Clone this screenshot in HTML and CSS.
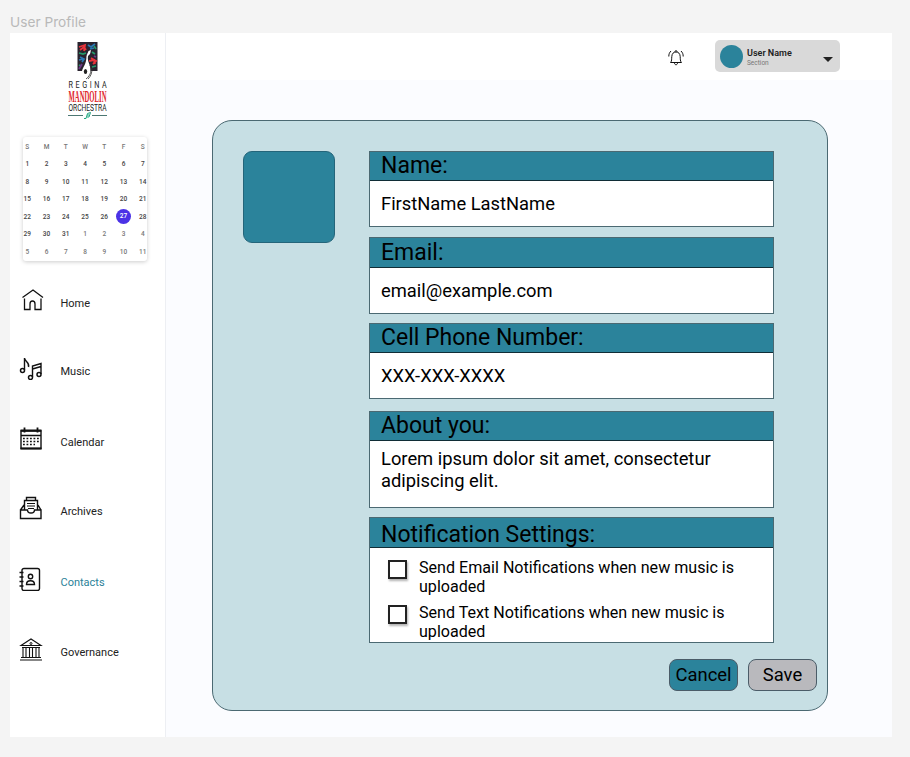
FILE: index.html
```html
<!DOCTYPE html>
<html lang="en">
<head>
<meta charset="utf-8">
<title>User Profile</title>
<link rel="stylesheet" href="styles.css">
</head>
<body>
<div class="frame-title">User Profile</div>
<div class="frame">
  <aside class="sidebar">
    <svg class="logo" width="42" height="80" viewBox="0 0 42 80">
      <rect x="10.500" y="1" width="20" height="29" fill="#29232e"/>
      <g fill="none" stroke-width="1.800">
        <path stroke="#e8333a" d="M12 6l6-2-1 6M13 9l4-3 2 3M24 17l5 3-3 3M22 20l5-1 1 4"/>
        <path stroke="#2b78b5" d="M21 4l3 2 4-3M23 8l4-1M13 16l4 2-2 3M12 19l4-1"/>
        <path stroke="#25986a" d="M12 12l4 1 3-1M25 11l3 2M25 26l4-1M27 5l2 3M12 24l2 1"/>
        <path stroke="#6e3787" d="M20 14l3-3M12 28l3-5M27 15l2 1"/>
      </g>
      <path d="M21.500 10l2.500-1-1 4-2 2c-1 6 2.500 8 2.500 14 0 6-3 9-5.500 9s-4-4-3-8c1-4 4.500-7 4.500-15z" fill="#fff"/>
      <ellipse cx="18.500" cy="30.500" rx="1.700" ry="2.500" fill="#222"/>
      <path d="M23 24c2 5 1 10-4 14M25 27c0 5-1 8-4 11" fill="none" stroke="#333" stroke-width=".8"/>
      <g class="logo-text">
        <text transform="translate(1.500 47) scale(.85 1)" font-size="8.500" textLength="45" fill="#222">REGINA</text>
        <text class="logo-serif" transform="translate(1.500 60.500) scale(1 1.750)" font-size="9" textLength="38" lengthAdjust="spacingAndGlyphs" fill="#e0262b">MANDOLIN</text>
        <text x="1.500" y="70" font-size="9" textLength="38" lengthAdjust="spacingAndGlyphs" fill="#222">ORCHESTRA</text>
      </g>
      <path d="M1 74.500h15M25 74.500h15" stroke="#4c7772" stroke-width="1"/>
      <path d="M17 77.500h2l1.500-5 3-1-1.500 4.500h-2M20 74h2" fill="none" stroke="#21a882" stroke-width="1"/>
    </svg>
    <div class="calendar">
      <b>S</b><b>M</b><b>T</b><b>W</b><b>T</b><b>F</b><b>S</b>
      <span>1</span><span>2</span><span>3</span><span>4</span><span>5</span><span>6</span><span>7</span>
      <span>8</span><span>9</span><span>10</span><span>11</span><span>12</span><span>13</span><span>14</span>
      <span>15</span><span>16</span><span>17</span><span>18</span><span>19</span><span>20</span><span>21</span>
      <span>22</span><span>23</span><span>24</span><span>25</span><span>26</span><span class="today">27</span><span>28</span>
      <span>29</span><span>30</span><span>31</span><i>1</i><i>2</i><i>3</i><i>4</i>
      <i>5</i><i>6</i><i>7</i><i>8</i><i>9</i><i>10</i><i>11</i>
    </div>
    <nav class="nav">
      <a class="item home">
        <svg width="24" height="24" viewBox="0 0 24 24"><path d="M1.500 9.500L12 2l10 7.500M3.500 10.500v11h5.500V16c0-4 5-4 5 0v5.500h6v-11" stroke-width="1.300"/></svg>
        <span>Home</span></a>
      <a class="item music">
        <svg width="24" height="24" viewBox="0 0 24 24"><path d="M5.500 14V2c0 3.500 5.500 4 4 9M13.500 21V10l8.500-2.500V18M13.500 13l8.500-2.500" stroke-width="1.400"/><g stroke-width="1.500"><ellipse cx="3.500" cy="14.500" rx="2" ry="2"/><ellipse cx="11.500" cy="21.500" rx="2" ry="2"/><ellipse cx="20" cy="18.500" rx="2" ry="2"/></g></svg>
        <span>Music</span></a>
      <a class="item cal">
        <svg width="24" height="24" viewBox="0 0 24 24"><path d="M2 4h20v17.500H2zM2 8.500h20" stroke-width="1.400"/><path d="M1.500 3.500h21M5.500 .5v5M18.500 .5v5M1.500 21.500h21" stroke-width="1.800"/><path d="M4 11.500h16.500M4 14.500h16.500M4 17.500h12" stroke-width="1.700" stroke-dasharray="1.800 1.700"/></svg>
        <span>Calendar</span></a>
      <a class="item archives">
        <svg width="24" height="24" viewBox="0 0 24 24"><path d="M1.500 14l3.500-5M19 9l3 5M1.500 14v8.500h20.500V14h-6.500c0 4-7 4-7 0zM5.500 13.500V4.500h13v9M7.500 4V1.500h9V4" stroke-width="1.400"/><path d="M8 7.500h8M8 10h8M9 12.500h6" stroke-width="1.200"/></svg>
        <span>Archives</span></a>
      <a class="item contacts active">
        <svg width="24" height="24" viewBox="0 0 24 24"><rect x="3" y="1.500" width="17.500" height="22" rx="2" stroke-width="1.400"/><path d="M.5 5.500h4M.5 10h4M.5 14.500h4M.5 19h4M7.500 17.500c0-5 8-5 8 0z" stroke-width="1.400"/><circle cx="11.500" cy="9.500" r="2.200" stroke-width="1.400"/></svg>
        <span>Contacts</span></a>
      <a class="item governance">
        <svg width="24" height="24" viewBox="0 0 24 24"><path d="M2 8.500L12 2l10 6.500zM3 10.500h18M2 20.500h20M1 23h22M4 11v9M7 11v9M10.500 11v9M13.500 11v9M17 11v9M20 11v9" stroke-width="1.100"/><circle cx="12" cy="6.500" r="1" stroke-width="1"/></svg>
        <span>Governance</span></a>
    </nav>
  </aside>
  <div class="main">
    <header class="topbar">
      <svg class="bell" width="16" height="18" viewBox="0 0 16 18"><path d="M2.500 13.500c1.500-1.500 1-3.500 1.300-6C4 4.500 5.500 3 8 3s4 1.500 4.200 4.500c.2 2.500-.2 4.500 1.300 6zM7 3c0-2 2-2 2 0M6.500 14c0 2.300 3 2.300 3 0M.8 7.500C.8 5 1.500 3.500 3 2M15.200 7.500c0-2.500-.7-4-2.200-5.500"/></svg>
      <div class="user">
        <div class="avatar"></div>
        <div class="who"><strong>User Name</strong><small>Section</small></div>
        <div class="caret"></div>
      </div>
    </header>
    <section class="panel">
      <div class="photo"></div>
      <div class="fields">
        <div class="field name"><h2>Name:</h2><p>FirstName LastName</p></div>
        <div class="field email"><h2>Email:</h2><p>email@example.com</p></div>
        <div class="field phone"><h2>Cell Phone Number:</h2><p>XXX-XXX-XXXX</p></div>
        <div class="field about"><h2>About you:</h2><p>Lorem ipsum dolor sit amet, consectetur adipiscing elit.</p></div>
        <div class="field notify"><h2>Notification Settings:</h2>
          <div class="option"><div class="box"></div><div>Send Email Notifications when new music is uploaded</div></div>
          <div class="option"><div class="box"></div><div>Send Text Notifications when new music is uploaded</div></div>
        </div>
      </div>
      <div class="actions"><div class="btn cancel">Cancel</div><div class="btn save">Save</div></div>
    </section>
  </div>
</div>
</body>
</html>
```
FILE: styles.css
```css
* { box-sizing: border-box; }
body { margin: 0; padding: 0 18px 20px 10px; height: 757px; background: #f4f4f4; font-family: Roboto, sans-serif; color: #000; overflow: hidden; }
h2, p { margin: 0; font-weight: 400; }
.frame-title { height: 33px; padding-top: 13px; font: 13.700px/18px Inter, sans-serif; color: #b9b9b9; }
.frame { display: flex; width: 882px; height: 704px; background: #fbfcff; }
.sidebar { width: 156px; background: #fff; border-right: 1px solid #edeff3; }
.logo { display: block; margin: 8px 0 0 57px; overflow: visible; }
.logo-text { font-family: Roboto, sans-serif; }
.logo-serif { font-family: "Liberation Serif", serif; font-weight: 700; }
.calendar { display: grid; grid-template-columns: repeat(7, 19.250px); grid-auto-rows: 17.500px; justify-content: center; align-items: center; justify-items: center; width: 124px; height: 124px; margin: 16px 0 0 13px; padding-top: 1px; background: #fff; border-radius: 3px; box-shadow: 0 1px 4px rgba(0,0,0,.2); font-size: 6.500px; font-weight: 500; color: #444; }
.calendar b { font-weight: 500; color: #777; font-size: 6.500px; }
.calendar i { font-style: normal; color: #777; }
.calendar .today { width: 15px; height: 15px; border-radius: 50%; background: #4b32e6; color: #fff; line-height: 15px; text-align: center; }
.item { display: flex; align-items: flex-start; height: 24px; margin-left: 9px; font-size: 11px; line-height: 16px; color: #222; }
.item svg { fill: none; stroke: #111; margin-right: 17.500px; flex: none; }
.item span { padding-top: 8px; white-space: nowrap; }
.home { margin-top: 27px; }
.home svg { margin-left: 2px; margin-right: 15.500px; }
.music { margin-top: 44px; }
.cal { margin-top: 47px; }
.archives { margin-top: 45px; }
.contacts { margin-top: 47px; }
.governance { margin-top: 46px; }
.active { color: #2a8299; }
.main { flex: 1; }
.topbar { display: flex; align-items: flex-start; height: 47px; background: #fff; padding: 7px 52px 0 0; justify-content: flex-end; }
.bell { fill: none; stroke: #111; margin: 9px 31px 0 0; }
.user { display: flex; align-items: center; width: 125px; height: 32px; border-radius: 5px; background: #d9d9d9; padding: 0 7px 0 5px; }
.avatar { width: 23px; height: 23px; border-radius: 50%; background: #2b839b; }
.who { flex: 1; margin-left: 4px; padding-top: 2px; }
.who strong { display: block; font-size: 9px; line-height: 11px; font-weight: 600; color: #222; }
.who small { display: block; font-size: 6.500px; line-height: 8px; color: #777; }
.caret { border: 5px solid transparent; border-top-color: #222; border-bottom: 0; margin-top: 6px; }
.panel { display: grid; grid-template-columns: 126px 405px; align-content: start; width: 616px; height: 591px; margin: 40px 0 0 46px; padding: 30px 0 0 30px; background: #c7dfe4; border: 1px solid #4b6972; border-radius: 20px; }
.photo { width: 92px; height: 92px; border: 1px solid #24657a; border-radius: 9px; background: #2b839b; }
.field { background: #fff; border: 1px solid #4b6972; height: 76px; margin-bottom: 10px; }
.field h2 { height: 29px; padding-left: 11px; background: #2b839b; border-bottom: 1px solid #102d36; font-size: 23px; line-height: 27px; }
.field p { padding: 12px 11px 0; font-size: 18.350px; line-height: 22px; }
.email { height: 77px; margin-bottom: 9px; }
.email h2 { height: 30px; line-height: 29px; }
.phone { margin-bottom: 12px; }
.about { height: 97px; margin-bottom: 9px; }
.about p { padding-top: 7px; }
.notify { height: 126px; margin-bottom: 16px; }
.notify h2 { height: 30px; line-height: 33px; }
.option { display: flex; height: 45px; padding: 10px 30px 0 18px; font-size: 16.100px; line-height: 19px; }
.box { flex: none; width: 19px; height: 19px; margin: 2px 12px 0 0; border: 2px solid #222; background: #fff; box-shadow: 1px 2px 2px rgba(0,0,0,.3); }
.actions { grid-column: 1 / -1; display: flex; gap: 10px; padding-left: 426px; width: 574px; }
.btn { flex: none; width: 69px; height: 32px; border: 1px solid #4b5c68; border-radius: 8px; text-align: center; font-size: 18.400px; line-height: 30px; }
.cancel { background: #2b839b; }
.save { background: #b9b9bd; }
```
